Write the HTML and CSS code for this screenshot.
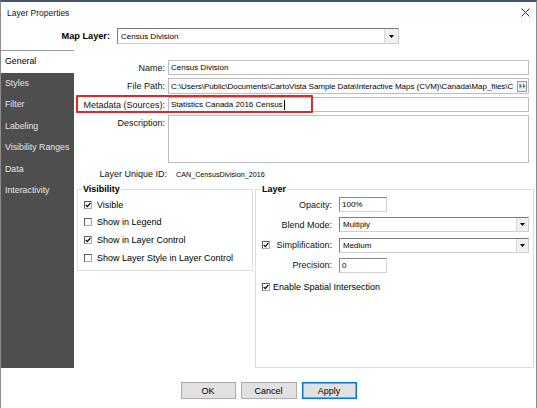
FILE: index.html
```html
<!DOCTYPE html>
<html>
<head>
<meta charset="utf-8">
<title>Layer Properties</title>
<link rel="stylesheet" href="styles.css">
</head>
<body>
<div class="window">
  <div class="titlebar">
    <span class="title">Layer Properties</span>
    <svg class="close" width="9" height="9" viewBox="0 0 9 9"><path d="M0.5 0.5L8.5 8.5M8.5 0.5L0.5 8.5" stroke="#333" stroke-width="1"/></svg>
  </div>
  <div class="maprow">
    <span class="maplabel">Map Layer:</span>
    <div class="combo mapcombo"><span class="val">Census Division</span><span class="arrow big"><svg width="7" height="4" viewBox="0 0 7 4"><path d="M0 0H7L3.5 4Z" fill="#000"/></svg></span></div>
  </div>
  <div class="main">
    <nav class="sidebar">
      <div class="tab active">General</div>
      <div class="tab">Styles</div>
      <div class="tab">Filter</div>
      <div class="tab">Labeling</div>
      <div class="tab">Visibility Ranges</div>
      <div class="tab">Data</div>
      <div class="tab">Interactivity</div>
    </nav>
    <div class="content">
      <div class="fields">
        <span class="lbl">Name:</span>
        <div class="input">Census Division</div>
        <span class="lbl">File Path:</span>
        <div class="input path"><span class="pathtext">C:\Users\Public\Documents\CartoVista Sample Data\Interactive Maps (CVM)\Canada\Map_files\C</span><span class="browse"><svg width="8" height="7" viewBox="0 0 8 7"><path d="M0.5 0.5L3.5 3.5L0.5 6.5Z M4.5 0.5L7.5 3.5L4.5 6.5Z" fill="#1a9a9a"/></svg></span></div>
        <span class="lbl">Metadata (Sources):</span>
        <div class="input">Statistics Canada 2016 Census<span class="caret"></span></div>
        <span class="lbl lbltop">Description:</span>
        <div class="input area"></div>
        <span class="lbl lbluid">Layer Unique ID:</span>
        <div class="plain">CAN_CensusDivision_2016</div>
        <div class="highlight"></div>
      </div>
      <div class="groups">
        <fieldset class="group vis">
          <legend>Visibility</legend>
          <div class="cbrow"><span class="cb"><svg width="6" height="6" viewBox="0 0 6 6"><path d="M0.7 2.9L2.3 4.6L5.4 1" stroke="#000" stroke-width="1.2" fill="none"/></svg></span>Visible</div>
          <div class="cbrow"><span class="cb"></span>Show in Legend</div>
          <div class="cbrow"><span class="cb"><svg width="6" height="6" viewBox="0 0 6 6"><path d="M0.7 2.9L2.3 4.6L5.4 1" stroke="#000" stroke-width="1.2" fill="none"/></svg></span>Show in Layer Control</div>
          <div class="cbrow"><span class="cb"></span>Show Layer Style in Layer Control</div>
        </fieldset>
        <fieldset class="group layer">
          <legend>Layer</legend>
          <div class="lgrid">
            <span class="llbl">Opacity:</span>
            <div class="input small sunk">100%</div>
            <span class="llbl">Blend Mode:</span>
            <div class="combo"><span class="val">Multiply</span><span class="arrow"><svg width="7" height="4" viewBox="0 0 7 4"><path d="M0 0H7L3.5 4Z" fill="#000"/></svg></span></div>
            <span class="llbl split"><span class="cb"><svg width="6" height="6" viewBox="0 0 6 6"><path d="M0.7 2.9L2.3 4.6L5.4 1" stroke="#000" stroke-width="1.2" fill="none"/></svg></span><span>Simplification:</span></span>
            <div class="combo"><span class="val">Medium</span><span class="arrow"><svg width="7" height="4" viewBox="0 0 7 4"><path d="M0 0H7L3.5 4Z" fill="#000"/></svg></span></div>
            <span class="llbl">Precision:</span>
            <div class="input small sunk">0</div>
            <div class="cbrow full"><span class="cb"><svg width="6" height="6" viewBox="0 0 6 6"><path d="M0.7 2.9L2.3 4.6L5.4 1" stroke="#000" stroke-width="1.2" fill="none"/></svg></span>Enable Spatial Intersection</div>
          </div>
        </fieldset>
      </div>
    </div>
  </div>
  <div class="buttons">
    <button class="btn ok">OK</button>
    <button class="btn cancel">Cancel</button>
    <button class="btn apply">Apply</button>
  </div>
</div>
</body>
</html>
```

FILE: styles.css
```css
html, body {
  margin: 0;
  padding: 0;
  background: #ffffff;
}

.window {
  width: 537px;
  height: 408px;
  box-sizing: border-box;
  border-top: 2px solid #44556f;
  border-left: 1px solid #8c8c8c;
  border-right: 1px solid #8c8c8c;
  background: #ffffff;
  font-family: "Liberation Sans", Arial, sans-serif;
  color: #000;
  display: flex;
  flex-direction: column;
  overflow: hidden;
}

.titlebar {
  height: 26px;
  display: flex;
  align-items: flex-start;
  flex-shrink: 0;
}

.title {
  font-size: 8.5px;
  line-height: 12px;
  padding: 5px 0 0 6px;
  color: #111;
}

.close {
  margin: 6px 6px 0 auto;
}

.maprow {
  height: 16px;
  display: flex;
  align-items: center;
  flex-shrink: 0;
}

.maplabel {
  width: 109px;
  text-align: right;
  font-weight: bold;
  font-size: 9.2px;
  margin-right: 7px;
}

.combo {
  box-sizing: border-box;
  height: 15px;
  border: 1px solid;
  border-color: #7a7a7a #cfcfcf #cfcfcf #7a7a7a;
  display: flex;
  align-items: stretch;
  background: #fff;
}

.mapcombo {
  width: 282px;
  height: 16px;
}

.combo .val {
  flex: 1;
  font-size: 8px;
  padding-left: 3px;
  display: flex;
  align-items: center;
}

.arrow {
  width: 11px;
  background: #f0f0f0;
  border-left: 1px solid #d6d6d6;
  display: flex;
  align-items: center;
  justify-content: center;
}

.arrow svg {
  width: 5px;
  height: 3px;
}

.arrow.big {
  width: 13px;
}

.main {
  margin-top: 6px;
  height: 318px;
  display: flex;
  flex-shrink: 0;
}

.sidebar {
  width: 73px;
  background: #4e4e4e;
  box-sizing: border-box;
  border-top: 1px solid #9a9a9a;
  flex-shrink: 0;
}

.tab {
  height: 21.5px;
  line-height: 21.5px;
  padding-left: 4px;
  font-size: 8.8px;
  color: #e4e4e4;
  white-space: nowrap;
}

.tab.active {
  background: #ffffff;
  color: #000;
}

.content {
  flex: 1;
  padding: 10px 2px 0 3px;
  display: flex;
  flex-direction: column;
  min-width: 0;
}

.fields {
  position: relative;
  display: grid;
  grid-template-columns: 88px 1fr;
  grid-template-rows: 15px 16px 15px 48px 16px;
  column-gap: 3px;
  row-gap: 3px;
  margin-right: 5px;
}

.lbl {
  font-size: 9px;
  text-align: right;
  display: flex;
  align-items: center;
  justify-content: flex-end;
  white-space: nowrap;
  color: #111;
}

.lbltop {
  align-items: flex-start;
  padding-top: 3px;
}

.lbluid {
  margin-right: -2px;
}

.input {
  box-sizing: border-box;
  border: 1px solid #bdbdbd;
  font-size: 8px;
  padding-left: 2px;
  display: flex;
  align-items: center;
  white-space: nowrap;
  overflow: hidden;
  background: #fff;
}

.input.sunk {
  border-color: #8a8a8a #d4d4d4 #d4d4d4 #8a8a8a;
}

.input.small {
  width: 48px;
}

.input.area {
  align-items: flex-start;
}

.path {
  padding-right: 1px;
}

.pathtext {
  flex: 1;
  white-space: nowrap;
  letter-spacing: -0.05px;
}

.browse {
  width: 10px;
  height: 11px;
  box-sizing: border-box;
  border: 1px solid #9a9a9a;
  background: #ececec;
  display: flex;
  align-items: center;
  justify-content: center;
  flex-shrink: 0;
}

.browse svg {
  width: 7px;
  height: 6px;
}

.caret {
  display: inline-block;
  width: 1px;
  height: 10px;
  background: #000;
  margin-left: 1px;
}

.plain {
  font-size: 7.2px;
  display: flex;
  align-items: center;
  padding-left: 8px;
  white-space: nowrap;
}

.highlight {
  position: absolute;
  left: -1px;
  top: 35px;
  width: 237px;
  height: 18px;
  box-sizing: border-box;
  border: 2px solid #e3262a;
  border-radius: 1px;
  pointer-events: none;
}

.groups {
  margin-top: 1px;
  flex: 1;
  display: flex;
  gap: 2px;
  align-items: flex-start;
}

.group {
  margin: 0;
  border: 1px solid #dcdcdc;
  min-width: 0;
  box-sizing: border-box;
}

.group legend {
  font-size: 9px;
  font-weight: bold;
  line-height: 12px;
  padding: 0 1px;
}

.vis {
  width: 176px;
  padding: 1px 0 4px 6px;
}

.vis legend {
  margin-left: -2px;
}

.layer {
  width: 279px;
  align-self: stretch;
  padding: 2px 4px 0 6px;
}

.layer legend {
  margin-left: -1px;
}

.cbrow {
  height: 17.6px;
  display: flex;
  align-items: center;
  gap: 5px;
  font-size: 9px;
  white-space: nowrap;
}

.cb {
  width: 8px;
  height: 8px;
  box-sizing: border-box;
  border: 1px solid;
  border-color: #5a5a5a #a8a8a8 #a8a8a8 #5a5a5a;
  background: #fff;
  display: flex;
  align-items: center;
  justify-content: center;
  flex-shrink: 0;
}

.lgrid {
  display: grid;
  grid-template-columns: 74px 1fr;
  grid-auto-rows: 15px;
  column-gap: 3px;
  row-gap: 5.33px;
}

.llbl {
  font-size: 9px;
  display: flex;
  align-items: center;
  justify-content: flex-end;
  padding-right: 4px;
  white-space: nowrap;
  color: #111;
}

.llbl.split {
  justify-content: space-between;
}

.cbrow.full {
  grid-column: 1 / -1;
  height: 14px;
  margin-top: 2px;
  gap: 3px;
}

.buttons {
  margin-top: 14px;
  display: flex;
  justify-content: center;
  gap: 5px;
}

.btn {
  height: 17px;
  box-sizing: border-box;
  border: 1px solid #adadad;
  background: #e1e1e1;
  font-family: "Liberation Sans", Arial, sans-serif;
  font-size: 9px;
  color: #000;
  padding: 0;
}

.ok { width: 55px; }
.cancel { width: 56px; }
.apply {
  width: 55px;
  border-color: #0078d7;
  box-shadow: inset 0 0 0 0.5px #0078d7;
}
```
